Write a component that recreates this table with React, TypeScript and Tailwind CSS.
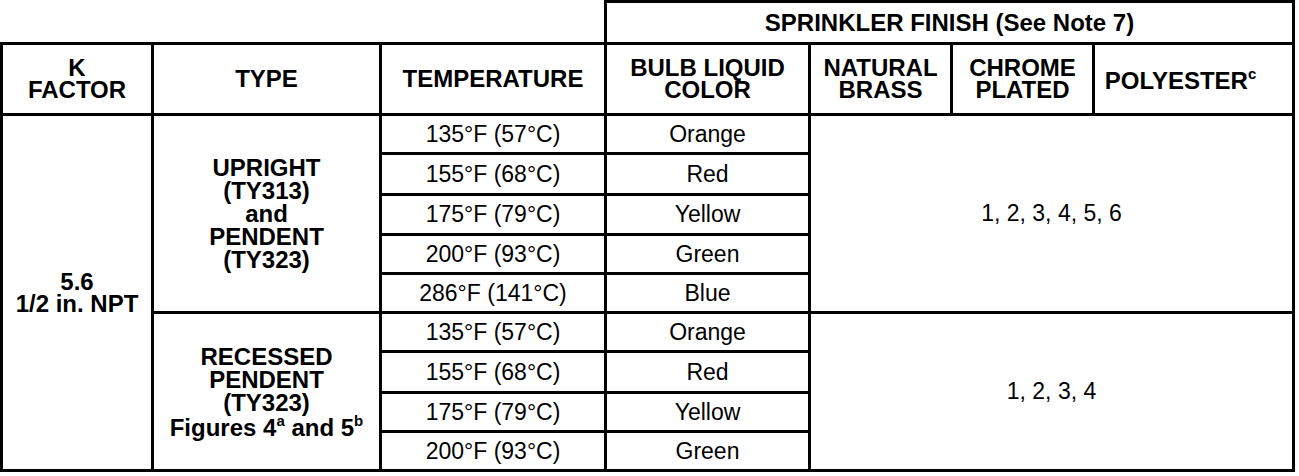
import React from "react";

// finish table rows, grouped by sprinkler type
const upright = [
  { temp: "135°F (57°C)", color: "Orange", h: "h-[39px]" },
  { temp: "155°F (68°C)", color: "Red", h: "h-[41px]" },
  { temp: "175°F (79°C)", color: "Yellow", h: "h-[40px]" },
  { temp: "200°F (93°C)", color: "Green", h: "h-[39px]" },
  { temp: "286°F (141°C)", color: "Blue", h: "h-[39px]" },
];

const recessed = [
  { temp: "135°F (57°C)", color: "Orange", h: "h-[39px]" },
  { temp: "155°F (68°C)", color: "Red", h: "h-[41px]" },
  { temp: "175°F (79°C)", color: "Yellow", h: "h-[39px]" },
  { temp: "200°F (93°C)", color: "Green", h: "h-[39px]" },
];

const cell = "border-[3px] border-black p-0 text-center align-middle";
const head = cell + " font-bold text-[24px] leading-[22px]";
const bold = cell + " font-bold text-[24px] leading-[23px]";

const Sup: React.FC<{ children: React.ReactNode }> = ({ children }) => (
  <sup className="relative top-[-1px] text-[15px] leading-none font-bold align-super">
    {children}
  </sup>
);

const App: React.FC = () => {
  return (
    <div className="bg-white w-[1299px] h-[476px] text-black font-['Liberation_Sans',Arial,Helvetica,sans-serif] text-[23px]">
      <table className="table-fixed border-collapse w-[1295px]">
        <colgroup>
          <col className="w-[151px]" />
          <col className="w-[228px]" />
          <col className="w-[225px]" />
          <col className="w-[204px]" />
          <col className="w-[142px]" />
          <col className="w-[142px]" />
          <col className="w-[200px]" />
        </colgroup>
        <thead>
          <tr className="h-[42px]">
            <td colSpan={3} className="p-0" />
            <th colSpan={4} className={head}>
              SPRINKLER FINISH (See Note 7)
            </th>
          </tr>
          <tr className="h-[71px]">
            <th className={head}>
              K<br />FACTOR
            </th>
            <th className={head}>TYPE</th>
            <th className={head}>TEMPERATURE</th>
            <th className={head}>
              BULB LIQUID
              <br />
              COLOR
            </th>
            <th className={head}>
              NATURAL
              <br />
              BRASS
            </th>
            <th className={head}>
              CHROME
              <br />
              PLATED
            </th>
            <th className={head + " pr-[26px]"}>
              POLYESTER<Sup>c</Sup>
            </th>
          </tr>
        </thead>
        <tbody>
          {upright.map((r, i) => (
            <tr key={"u" + i} className={r.h}>
              {i === 0 && (
                <td rowSpan={9} className={head}>
                  5.6
                  <br />
                  1/2 in. NPT
                </td>
              )}
              {i === 0 && (
                <td rowSpan={5} className={bold}>
                  UPRIGHT
                  <br />
                  (TY313)
                  <br />
                  and
                  <br />
                  PENDENT
                  <br />
                  (TY323)
                </td>
              )}
              <td className={cell}>{r.temp}</td>
              <td className={cell}>{r.color}</td>
              {i === 0 && (
                <td rowSpan={5} colSpan={3} className={cell}>
                  1, 2, 3, 4, 5, 6
                </td>
              )}
            </tr>
          ))}
          {recessed.map((r, i) => (
            <tr key={"r" + i} className={r.h}>
              {i === 0 && (
                <td rowSpan={4} className={bold}>
                  RECESSED
                  <br />
                  PENDENT
                  <br />
                  (TY323)
                  <br />
                  Figures 4<Sup>a</Sup> and 5<Sup>b</Sup>
                </td>
              )}
              <td className={cell}>{r.temp}</td>
              <td className={cell}>{r.color}</td>
              {i === 0 && (
                <td rowSpan={4} colSpan={3} className={cell}>
                  1, 2, 3, 4
                </td>
              )}
            </tr>
          ))}
        </tbody>
      </table>
    </div>
  );
};

export default App;
